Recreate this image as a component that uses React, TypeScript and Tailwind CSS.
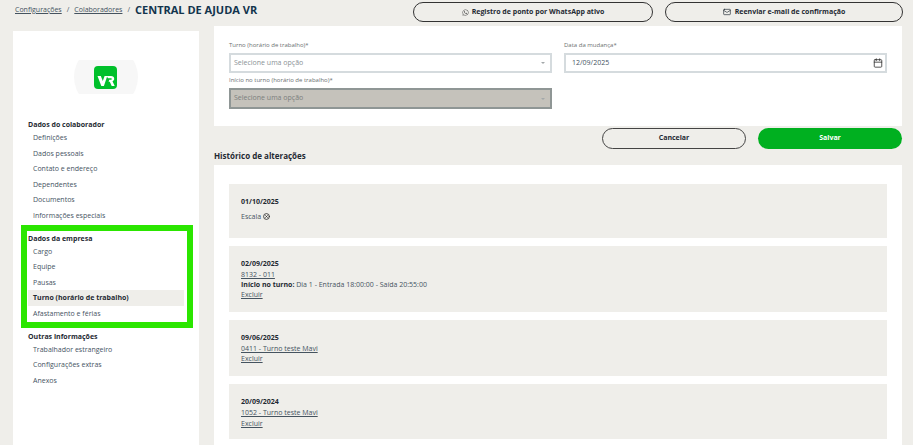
import { Calendar, CircleX, Mail } from "lucide-react";
import { FaWhatsapp } from "react-icons/fa";

const groups = [
  {
    title: "Dados do colaborador",
    items: ["Definições", "Dados pessoais", "Contato e endereço", "Dependentes", "Documentos", "Informações especiais"],
  },
  {
    title: "Dados da empresa",
    items: ["Cargo", "Equipe", "Pausas", "Turno (horário de trabalho)", "Afastamento e férias"],
  },
  {
    title: "Outras informações",
    items: ["Trabalhador estrangeiro", "Configurações extras", "Anexos"],
  },
];

function Sidebar() {
  return (
    <aside className="relative w-[186px] shrink-0 bg-white pt-[29px] pl-[15px] pr-[15px]">
      {/* Logo on a circle cut off at top and bottom */}
      <div className="grid h-[34px] grid-rows-[34px] place-items-center overflow-hidden">
        <div className="col-start-1 row-start-1 h-[64px] w-[64px] rounded-full bg-[#f7f7f7]" />
        <div className="col-start-1 row-start-1 ml-[-1px] h-[23px] w-[23px] rounded-[4px] bg-[#00c02b]">
          <svg viewBox="0 0 23 23" className="h-[23px] w-[23px]">
            <path
              d="M3.5 10h3.3l2 5 1.8-5h2.7L9.9 20H7.3z M12.8 10h4.2c2 0 3.2 1 3.2 2.8 0 1.3-.7 2.1-1.7 2.5l2.2 4.7h-3l-1.9-4.2h-1.2l.7-2h1.6c.6 0 1-.3 1-.8s-.4-.8-1-.8h-3z"
              fill="#fff"
            />
          </svg>
        </div>
      </div>

      <nav className="mt-[24px] flex flex-col gap-[8.5px]">
        {groups.map((g) => (
          <div key={g.title} className="flex flex-col">
            <div className="h-[12px] text-[7px] leading-[14px] font-bold text-[#1f2a33]">{g.title}</div>
            {g.items.map((item) => {
              const active = item.startsWith("Turno");
              return (
                <div
                  key={item}
                  className={
                    active
                      ? "h-[15.5px] bg-[#efeeea] pl-[5px] text-[7px] leading-[15.5px] font-bold text-[#1f2a33]"
                      : "h-[15.5px] pl-[5px] text-[7px] leading-[15.5px] text-[#45535f]"
                  }
                >
                  {item}
                </div>
              );
            })}
          </div>
        ))}
      </nav>

      {/* highlight drawn over the screenshot */}
      <div className="pointer-events-none absolute left-[8px] top-[194px] h-[103px] w-[172px] border-[6px] border-[#2be600]" />
    </aside>
  );
}

function Select({ disabled }: { disabled?: boolean }) {
  return (
    <div
      className={
        disabled
          ? "flex h-[21px] items-center justify-between border-2 border-[#8f9695] bg-[#c5c2bb] pr-[5px] pl-[3px] text-[7px] text-[#7c7f7d]"
          : "flex h-[20px] items-center justify-between border-2 border-[#d5dbde] bg-white pr-[5px] pl-[3px] text-[7px] text-[#8b9296]"
      }
    >
      <span>Selecione uma opção</span>
      <span className="h-0 w-0 border-x-[2px] border-t-[2px] border-x-transparent border-t-[#a3a8aa]" />
    </div>
  );
}

function Entry({ date, children, height }: { date: string; children?: React.ReactNode; height: string }) {
  return (
    <div className={`${height} bg-[#efeeea] px-[12px]`}>
      <div className="text-[7px] leading-[11px] font-bold text-[#1f2a33]">{date}</div>
      {children}
    </div>
  );
}

export default function App() {
  return (
    <div className="flex h-[445px] w-[913px] flex-col overflow-hidden bg-[#efeeea] font-['Open_Sans',sans-serif]">
      {/* Top bar */}
      <header className="flex h-[26px] shrink-0 items-start pr-[10px]">
        <div className="flex h-[20px] items-center pl-[15px] text-[#45535f]">
          <span className="text-[7px] underline">Configurações</span>
          <span className="mx-[5px] text-[7px]">/</span>
          <span className="text-[7px] underline">Colaboradores</span>
          <span className="mx-[5px] text-[7px]">/</span>
          <span className="text-[11px] font-bold text-[#12344d]">CENTRAL DE AJUDA VR</span>
        </div>
        <div className="ml-auto flex gap-[12px] pt-[2px]">
          <button className="flex h-[20px] w-[240px] items-center justify-center gap-[3px] rounded-full border border-[#333] text-[7px] font-bold text-[#1f2a33]">
            <FaWhatsapp className="h-[7px] w-[7px] text-[#555]" />
            Registro de ponto por WhatsApp ativo
          </button>
          <button className="flex h-[20px] w-[238px] items-center justify-center gap-[4px] rounded-full border border-[#333] text-[7px] font-bold text-[#1f2a33]">
            <Mail className="h-[8px] w-[8px]" strokeWidth={2} />
            Reenviar e-mail de confirmação
          </button>
        </div>
      </header>

      <div className="flex min-h-0 flex-1 gap-[15px] pl-[13px] pt-[5px]">
        <Sidebar />

        <main className="-mt-[5px] flex w-[688px] flex-col">
          {/* Form */}
          <section className="h-[100px] bg-white px-[15px] pt-[13px]">
            <div className="grid grid-cols-2 gap-x-[12px]">
              <div>
                <div className="h-[14px] text-[6px] leading-[12px] text-[#6b6f70]">Turno (horário de trabalho)*</div>
                <Select />
                <div className="h-[15px] pt-[2px] text-[6px] leading-[11px] text-[#6b6f70]">Início no turno (horário de trabalho)*</div>
                <Select disabled />
              </div>
              <div>
                <div className="h-[14px] text-[6px] leading-[12px] text-[#6b6f70]">Data da mudança*</div>
                <div className="flex h-[20px] items-center justify-between border-2 border-[#d5dbde] bg-white pr-[2px] pl-[6px] text-[7px] text-[#45535f]">
                  <span>12/09/2025</span>
                  <Calendar className="h-[10px] w-[10px] text-[#333]" strokeWidth={2} />
                </div>
              </div>
            </div>
          </section>

          {/* Actions */}
          <div className="mt-[2px] flex justify-end gap-[12px]">
            <button className="h-[21px] w-[144px] rounded-full border border-[#444] text-[7px] font-bold text-[#1f2a33]">Cancelar</button>
            <button className="h-[21px] w-[144px] rounded-full bg-[#00b020] text-[7px] font-bold text-white">Salvar</button>
          </div>

          <h2 className="mt-[1px] h-[15px] text-[8px] leading-[12px] font-bold text-[#1f2a33]">Histórico de alterações</h2>

          {/* History */}
          <section className="flex flex-1 flex-col gap-[8px] bg-white px-[15px] pt-[19px]">
            <Entry date="01/10/2025" height="h-[54px] pt-[12px]">
              <div className="mt-[4px] flex items-center gap-[2px] text-[7px] leading-[11px] text-[#45535f]">
                Escala
                <CircleX className="h-[7px] w-[7px] text-[#333]" strokeWidth={3} />
              </div>
            </Entry>
            <Entry date="02/09/2025" height="h-[66px] pt-[12px]">
              <div className="text-[7px] leading-[11px] text-[#45535f] underline">8132 - 011</div>
              <div className="text-[7px] leading-[9px] text-[#45535f]">
                <b className="text-[#1f2a33]">Início no turno:</b> Dia 1 - Entrada 18:00:00 - Saída 20:55:00
              </div>
              <div className="text-[7px] leading-[11px] text-[#45535f] underline">Excluir</div>
            </Entry>
            <Entry date="09/06/2025" height="h-[56px] pt-[12px]">
              <div className="text-[7px] leading-[11px] text-[#45535f] underline">0411 - Turno teste Mavi</div>
              <div className="text-[7px] leading-[10px] text-[#45535f] underline">Excluir</div>
            </Entry>
            <Entry date="20/09/2024" height="h-[55px] pt-[12px]">
              <div className="text-[7px] leading-[11px] text-[#45535f] underline">1052 - Turno teste Mavi</div>
              <div className="text-[7px] leading-[11px] text-[#45535f] underline">Excluir</div>
            </Entry>
          </section>
        </main>
      </div>
    </div>
  );
}
